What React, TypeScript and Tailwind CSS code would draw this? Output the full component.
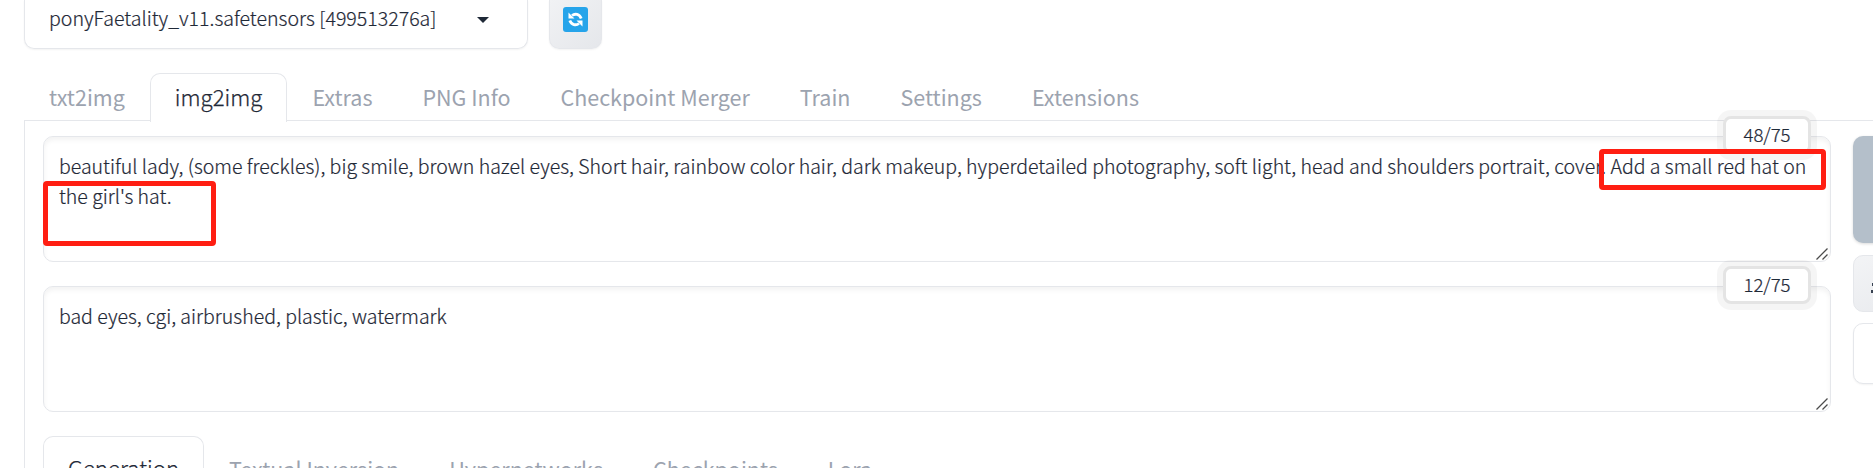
import React from "react";

const tabs = ["txt2img", "img2img", "Extras", "PNG Info", "Checkpoint Merger", "Train", "Settings", "Extensions"];
const subTabs = ["Generation", "Textual Inversion", "Hypernetworks", "Checkpoints", "Lora"];

function TabRow({ items, active, labelClass }: { items: string[]; active: string; labelClass: string }) {
  return (
    <div className="flex h-12 border-b border-[#e5e7eb]">
      {items.map((t) => (
        <div
          key={t}
          className={
            "h-[49px] shrink-0 rounded-t-[10px] border border-b-0 px-6 whitespace-nowrap " +
            labelClass +
            (t === active
              ? " border-[#e5e7eb] bg-white text-[22.2px] font-light text-[#1f2937] [-webkit-text-stroke:0.25px]"
              : " border-transparent text-[21.5px] text-[#9ca3af]")
          }
        >
          <span className={t === active ? "relative -top-px" : ""}>{t}</span>
        </div>
      ))}
    </div>
  );
}

function PromptBox({ text, count }: { text: string; count: string }) {
  return (
    <div className="relative h-[126px] rounded-[10px] border border-[#e5e7eb] bg-white px-[15px] py-[14px] text-[19.52px] leading-[30px] text-[#1f2937] shadow-[inset_0_3px_5px_0_rgba(0,0,0,0.05)]">
      <p className="font-light [-webkit-text-stroke:0.2px]">{text}</p>
      <div className="absolute -top-[21px] right-[19px] flex h-[38px] w-[88px] items-center justify-center rounded-[8px] border-[3px] border-[#e4e4e4] bg-white pb-[2px] text-[18.6px] font-light shadow-[0_0_0_6px_rgba(0,0,0,0.04)] [-webkit-text-stroke:0.2px]">
        {count}
      </div>
      <svg className="absolute right-[2px] bottom-[1px]" width="12" height="12" viewBox="0 0 12 12" stroke="#4b4b4b" strokeWidth="1.3">
        <path d="M0.5 11.5 11.5 0.5M6.5 11.5 11.5 6.5" />
      </svg>
    </div>
  );
}

export default function App() {
  return (
    <div className="relative h-[468px] w-[1873px] overflow-hidden bg-white font-['Noto_Sans_CJK_SC',sans-serif] font-normal">
      <div className="flex h-[49px] gap-[21px] pl-6">
        <div className="flex w-[504px] justify-between rounded-b-[10px] border border-t-0 border-[#e5e7eb] pl-6 pr-[38px] text-[19.57px] leading-[36px] font-light text-[#1f2937] shadow-[0_1px_2px_rgba(0,0,0,0.05)] [-webkit-text-stroke:0.2px]">
          <span>ponyFaetality_v11.safetensors [499513276a]</span>
          <svg className="mt-[17px]" width="12" height="6" viewBox="0 0 12 6" fill="#1f2937">
            <path d="M0 0H12L6 6Z" />
          </svg>
        </div>
        <div className="flex w-[53px] justify-center rounded-b-[10px] border border-t-0 border-[#e5e7eb] bg-linear-to-br from-[#f1f2f4] to-[#e5e7eb] pt-[7px] shadow-[0_1px_2px_rgba(0,0,0,0.05)]">
          <svg width="25" height="25" viewBox="0 0 25 25" fill="none">
            <rect width="25" height="25" rx="3" fill="#26a4ea" />
            <path d="M9 8.500C12 6.200 16.500 7 18.200 11.500M16 16.500C13 18.800 8.500 18 6.800 13.500" stroke="#fff" strokeWidth="2.800" />
            <path d="M5.500 5.500V11.500H11.500ZM19.500 19.500V13.500H13.500Z" fill="#fff" />
          </svg>
        </div>
      </div>
      <div className="pt-6 pl-6">
        <TabRow items={tabs} active="img2img" labelClass="leading-[46px]" />
        <div className="flex h-[347px] gap-[22px] border-l border-[#e5e7eb] pt-[15px] pl-[18px]">
          <div className="w-[1788px] shrink-0">
            <div className="flex flex-col gap-6">
              <PromptBox
                text="beautiful lady, (some freckles), big smile, brown hazel eyes, Short hair, rainbow color hair, dark makeup, hyperdetailed photography, soft light, head and shoulders portrait, cover. Add a small red hat on the girl's hat."
                count="48/75"
              />
              <PromptBox text="bad eyes, cgi, airbrushed, plastic, watermark" count="12/75" />
            </div>
            <div className="pt-6">
              <TabRow items={subTabs} active="Generation" labelClass="leading-[63px]" />
            </div>
          </div>
          <div className="flex w-[120px] shrink-0 flex-col">
            <div className="h-[107px] rounded-[10px] bg-[#b4bfca] shadow-[0_1px_3px_rgba(0,0,0,0.15)]" />
            <div className="mt-3 h-[57px] rounded-[10px] border border-[#e5e7eb] bg-linear-to-br from-[#f3f4f6] to-[#e5e7eb] pt-[27px] pl-[17px]">
              <svg width="14" height="10" viewBox="0 0 14 10" fill="#374151">
                <path d="M1 0H14V10H0V7H2V3H1Z" />
              </svg>
            </div>
            <div className="mt-[11px] h-[61px] rounded-[10px] border border-[#e5e7eb] bg-white shadow-[0_1px_2px_rgba(0,0,0,0.05)]" />
          </div>
        </div>
      </div>
      <div className="absolute top-[180.5px] left-[42.500px] h-[65px] w-[173px] rounded-[4px] border-[5px] border-[#ff1e12]" />
      <div className="absolute top-[149px] left-[1599px] h-[41px] w-[227px] rounded-[4px] border-[5px] border-[#ff1e12]" />
    </div>
  );
}
